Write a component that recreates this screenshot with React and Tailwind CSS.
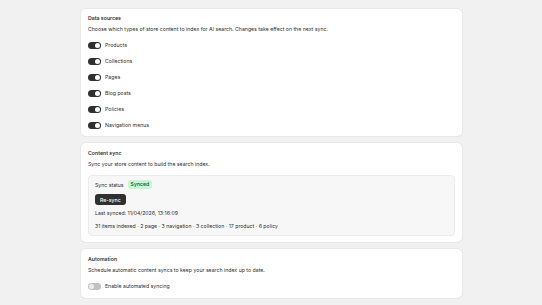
import { useState } from 'react';

function Toggle({ on, onClick }) {
  return (
    <button
      onClick={onClick}
      className={`relative w-[13px] h-[7px] rounded-full shrink-0 ${on ? 'bg-[#303030]' : 'bg-[#c2c2c2]'}`}
    >
      <span
        className={`absolute top-[1px] w-[5px] h-[5px] rounded-full ${on ? 'left-[7px] bg-white' : 'left-[1px] bg-[#ececec]'}`}
      />
    </button>
  );
}

export default function App() {
  const [sources, setSources] = useState({
    Products: true,
    Collections: true,
    Pages: true,
    'Blog posts': true,
    Policies: true,
    'Navigation menus': true,
  });
  const [auto, setAuto] = useState(false);

  return (
    <div className="min-h-screen bg-[#f1f1f1] font-['Inter',sans-serif] text-[#303030] text-[5.2px] leading-[8px]">
      <div className="w-[381px] ml-[81px] pt-[9px] flex flex-col gap-[7px]">
        {/* Data sources */}
        <div className="bg-white rounded-[5px] shadow-[0_0_0_1px_#e8e8e8,0_1px_0_#e0e0e0] px-[7px] pt-[5px] pb-[7px]">
          <h2 className="font-semibold">Data sources</h2>
          <p className="mt-[3px]">Choose which types of store content to index for AI search. Changes take effect on the next sync.</p>
          <div className="mt-[8px] flex flex-col gap-[8px]">
            {Object.keys(sources).map((k) => (
              <label key={k} className="flex items-center gap-[4px]">
                <Toggle on={sources[k]} onClick={() => setSources({ ...sources, [k]: !sources[k] })} />
                <span>{k}</span>
              </label>
            ))}
          </div>
        </div>

        {/* Content sync */}
        <div className="bg-white rounded-[5px] shadow-[0_0_0_1px_#e8e8e8,0_1px_0_#e0e0e0] px-[7px] pt-[6px] pb-[6px]">
          <h2 className="font-semibold">Content sync</h2>
          <p className="mt-[3px]">Sync your store content to build the search index.</p>
          <div className="mt-[7px] bg-[#f7f7f7] border border-[#ebebeb] rounded-[4px] px-[6px] pt-[4px] pb-[5px] flex flex-col items-start">
            <div className="flex items-center gap-[4px] h-[9px]">
              <span>Sync status</span>
              <span className="bg-[#c4f7d4] text-[#0c5132] font-medium rounded-[3px] px-[3px] leading-[9px]">Synced</span>
            </div>
            <button className="mt-[5px] bg-[#303030] text-white rounded-[3px] px-[5px] h-[11px] font-medium">Re-sync</button>
            <div className="mt-[4px]">Last synced: 11/04/2026, 13:16:09</div>
            <div className="mt-[5px]">31 items indexed · 2 page · 3 navigation · 3 collection · 17 product · 6 policy</div>
          </div>
        </div>

        {/* Automation */}
        <div className="bg-white rounded-[5px] shadow-[0_0_0_1px_#e8e8e8,0_1px_0_#e0e0e0] px-[7px] pt-[6px] pb-[8px]">
          <h2 className="font-semibold">Automation</h2>
          <p className="mt-[3px]">Schedule automatic content syncs to keep your search index up to date.</p>
          <label className="mt-[8px] flex items-center gap-[4px]">
            <Toggle on={auto} onClick={() => setAuto(!auto)} />
            <span>Enable automated syncing</span>
          </label>
        </div>
      </div>
    </div>
  );
}
